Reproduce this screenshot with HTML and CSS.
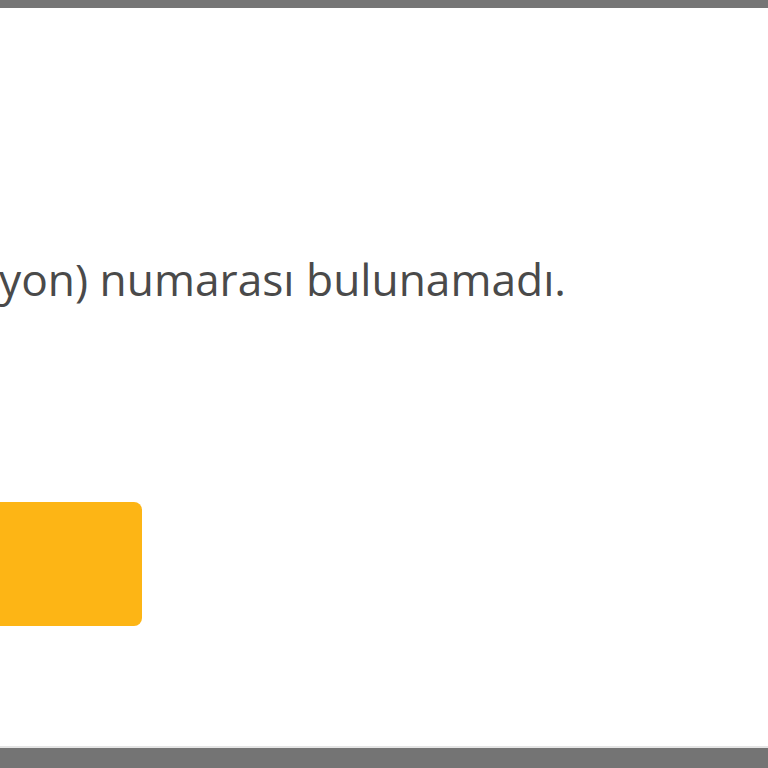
FILE: index.html
```html
<!DOCTYPE html>
<html lang="tr">
<head>
<meta charset="utf-8">
<title>Uyarı</title>
<link rel="stylesheet" href="styles.css">
</head>
<body>
  <div class="overlay-top"></div>
  <main class="dialog">
    <div class="dialog-body">
      <p class="message">yon) numarası bulunamadı.</p>
      <button class="btn-ok" type="button" aria-label="Tamam"></button>
    </div>
  </main>
  <div class="overlay-bottom"></div>
</body>
</html>
```
FILE: styles.css
```css
html, body {
  margin: 0;
  padding: 0;
  height: 768px;
  overflow: hidden;
  background: #ffffff;
}

body {
  display: flex;
  flex-direction: column;
  font-family: "Open Sans", "Noto Sans", sans-serif;
}

.overlay-top {
  height: 8px;
  background: #767676;
  box-shadow: 0 1px 3px rgba(0, 0, 0, 0.25);
  flex: none;
}

.dialog {
  flex: 1;
  background: #ffffff;
  overflow: hidden;
}

.dialog-body {
  padding-top: 241px;
  display: flex;
  flex-direction: column;
  align-items: flex-start;
}

.message {
  margin: 0 0 0 -1px;
  white-space: nowrap;
  font-size: 44.3px;
  line-height: 61px;
  color: #4a4a4a;
}

.btn-ok {
  margin-top: 192px;
  margin-left: -40px;
  width: 182px;
  height: 124px;
  border: none;
  border-radius: 8px;
  background: #fdb515;
}

.overlay-bottom {
  height: 20px;
  background: #747474;
  border-top: 2px solid #e4e4e4;
  flex: none;
}
```
